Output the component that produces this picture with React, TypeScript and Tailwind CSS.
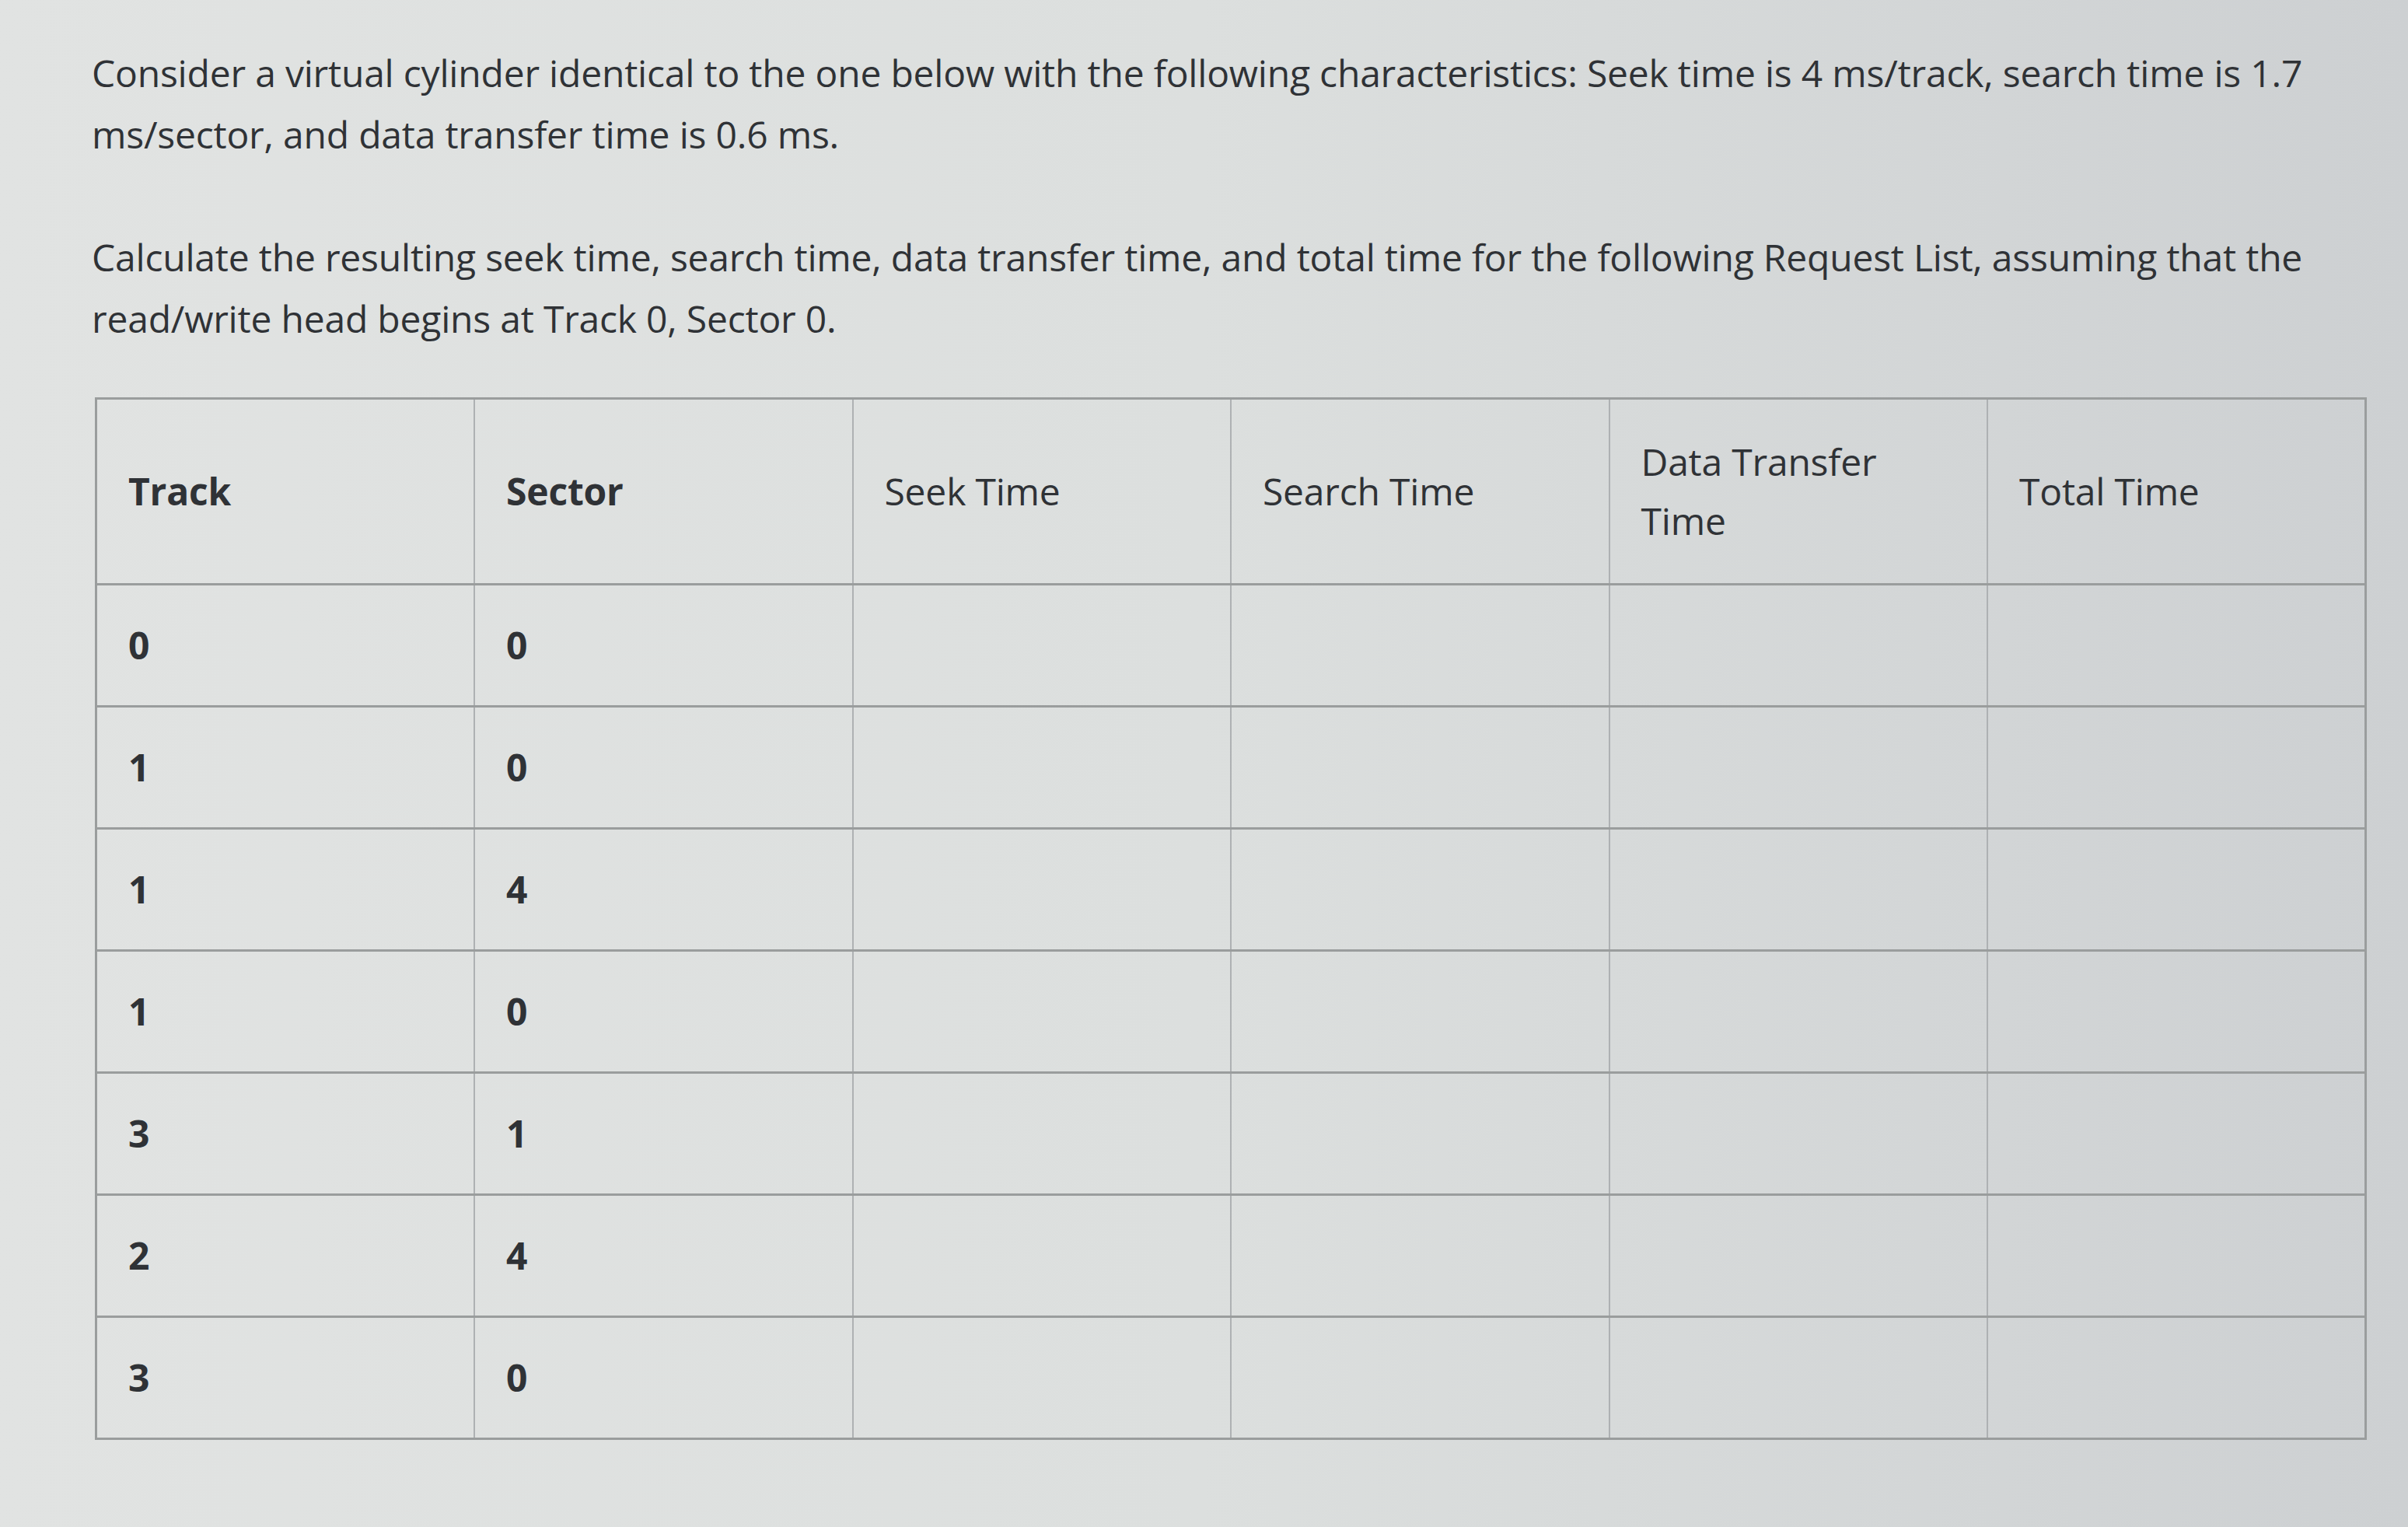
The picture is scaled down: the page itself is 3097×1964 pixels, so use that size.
import React from "react";

const headers = [
  { label: "Track", bold: true },
  { label: "Sector", bold: true },
  { label: "Seek Time", bold: false },
  { label: "Search Time", bold: false },
  { label: "Data Transfer Time", bold: false },
  { label: "Total Time", bold: false },
];

const requests = [
  [0, 0],
  [1, 0],
  [1, 4],
  [1, 0],
  [3, 1],
  [2, 4],
  [3, 0],
];

export default function App() {
  return (
    <div
      className="min-h-screen w-full bg-gradient-to-r from-[#e1e3e2] via-[#dcdfde] to-[#cdd0d2] text-[#2f3236] pl-[118px] pr-[50px] pt-[54px]"
      style={{ fontFamily: '"Open Sans", "Noto Sans", sans-serif' }}
    >
      {/* Question text */}
      <p className="text-[48px] leading-[79px] tracking-[-0.2px] max-w-[2920px]">
        Consider a virtual cylinder identical to the one below with the following characteristics: Seek time is 4 ms/track, search time is 1.7 ms/sector, and data transfer time is 0.6 ms.
      </p>
      <p className="mt-[79px] text-[48px] leading-[79px] tracking-[-0.2px] max-w-[2920px]">
        Calculate the resulting seek time, search time, data transfer time, and total time for the following Request List, assuming that the read/write head begins at Track 0, Sector 0.
      </p>

      {/* Request list table */}
      <table className="mt-[62px] ml-[4px] w-[2922px] table-fixed border-collapse border-[3px] border-[#9a9d9d] text-[48px] tracking-[-0.2px]">
        <thead>
          <tr className="h-[239px] border-b-[3px] border-[#9a9d9d]">
            {headers.map((h) => (
              <th
                key={h.label}
                className={`border-r-2 border-[#aeb1b3] px-[40px] text-left align-middle leading-[76px] ${
                  h.bold ? "font-bold" : "font-normal"
                }`}
              >
                <span className={h.label === "Data Transfer Time" ? "block max-w-[340px]" : ""}>{h.label}</span>
              </th>
            ))}
          </tr>
        </thead>
        <tbody>
          {requests.map(([track, sector], i) => (
            <tr key={i} className="h-[157px] border-b-[3px] border-[#9a9d9d]">
              <td className="border-r-2 border-[#aeb1b3] px-[40px] font-bold">{track}</td>
              <td className="border-r-2 border-[#aeb1b3] px-[40px] font-bold">{sector}</td>
              <td className="border-r-2 border-[#aeb1b3]"></td>
              <td className="border-r-2 border-[#aeb1b3]"></td>
              <td className="border-r-2 border-[#aeb1b3]"></td>
              <td className="border-r-2 border-[#aeb1b3]"></td>
            </tr>
          ))}
        </tbody>
      </table>
    </div>
  );
}
